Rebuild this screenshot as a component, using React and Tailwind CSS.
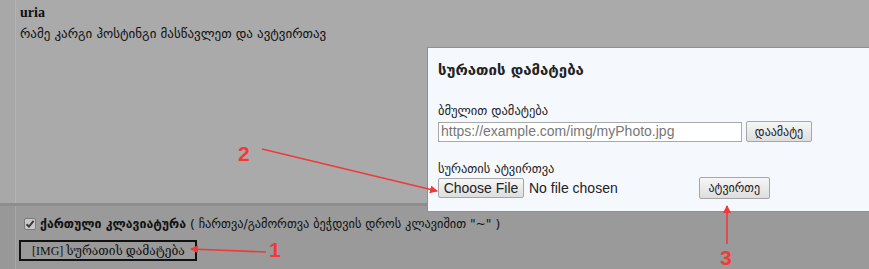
import React from "react";

const geo = { fontFamily: '"DejaVu Sans", "Noto Sans", sans-serif' };
const serif = { fontFamily: '"Liberation Serif", "DejaVu Serif", "DejaVu Sans", serif' };
const arial = { fontFamily: '"Liberation Sans", "DejaVu Sans", sans-serif' };

function Btn({ children, className = "" }) {
  return (
    <div
      className={
        "flex items-center justify-center whitespace-nowrap border border-[#a6a6a6] rounded-[2px] bg-gradient-to-b from-[#f6f6f6] to-[#dedede] text-[#222] " +
        className
      }
    >
      {children}
    </div>
  );
}

export default function App() {
  return (
    <div className="relative w-[869px] h-[269px] overflow-hidden bg-[#999a99]" style={arial}>
      {/* top area */}
      <div className="flex h-[203px] bg-[#a9aaa9]">
        <div className="w-[16px] border-r border-[#b3b4b3] bg-[#a7a8a7]" />
        <div className="flex-1 pl-[4px] pt-[4px]">
          <div className="text-[14px] font-bold leading-[18px] text-[#111]" style={serif}>
            uria
          </div>
          <div className="mt-[3px] text-[13px] leading-[17px] text-[#111] whitespace-nowrap" style={geo}>
            რამე კარგი ჰოსტინგი მასწავლეთ და ავტვირთავ
          </div>
        </div>
      </div>
      {/* separator */}
      <div className="h-[3px] bg-[#8c8d8c]" />
      {/* bottom area */}
      <div className="flex h-[63px]">
        <div className="w-[16px] border-r border-[#a6a7a6] bg-[#979897]" />
        <div className="flex-1 pl-[3px] pt-[10px]">
          <div className="flex items-center gap-[4px] h-[16px]">
            <span className="relative flex h-[12px] w-[12px] items-center justify-center rounded-[2px] border border-[#7a7a7a] bg-[#c9c9c9] ml-[5px]">
              <svg width="10" height="10" viewBox="0 0 10 10">
                <path d="M1.5 5.2 L4 7.6 L8.6 1.8" fill="none" stroke="#3a3a3a" strokeWidth="2" />
              </svg>
            </span>
            <span className="text-[12.3px] text-[#111] whitespace-nowrap" style={geo}>
              <b>ქართული კლავიატურა</b> ( ჩართვა/გამორთვა ბეჭდვის დროს კლავიშით "~" )
            </span>
          </div>
          <div className="mt-[8px] inline-flex h-[21px] w-[178px] items-center border-2 border-[#111] pl-[11px] whitespace-nowrap">
            <span className="text-[12px] leading-none text-[#111]" style={serif}>
              [IMG] სურათის დამატება
            </span>
          </div>
        </div>
      </div>

      {/* modal dialog */}
      <div className="absolute left-[427px] top-[47px] w-[450px] h-[165px] border border-[#8f8f8f] bg-[#f5f8fc] pl-[10px] pt-[12px]">
        <div className="text-[15px] font-bold leading-[20px] text-[#222] whitespace-nowrap" style={geo}>
          სურათის დამატება
        </div>
        <div className="mt-[23px] text-[12.5px] leading-[16px] text-[#222] whitespace-nowrap" style={geo}>
          ბმულით დამატება
        </div>
        <div className="mt-[2px] flex items-center gap-[4px]">
          <div className="flex h-[20px] w-[304px] items-center border border-[#a9a9a9] bg-white pl-[2px] text-[14px] text-[#777] whitespace-nowrap" style={arial}>
            https://example.com/img/myPhoto.jpg
          </div>
          <Btn className="h-[21px] w-[66px] text-[12px]">
            <span style={geo}>დაამატე</span>
          </Btn>
        </div>
        <div className="mt-[19px] text-[12.5px] leading-[16px] text-[#222] whitespace-nowrap" style={geo}>
          სურათის ატვირთვა
        </div>
        <div className="flex items-center">
          <Btn className="h-[20px] w-[86px] text-[14px]">Choose File</Btn>
          <span className="ml-[5px] text-[14px] text-[#222] whitespace-nowrap">No file chosen</span>
          <Btn className="ml-[81px] h-[22px] w-[71px] text-[12px]">
            <span style={geo}>ატვირთე</span>
          </Btn>
        </div>
      </div>

      {/* annotations */}
      <svg className="absolute left-0 top-0 pointer-events-none" width="869" height="269" viewBox="0 0 869 269">
        <defs>
          <marker id="ah" markerWidth="8" markerHeight="8" refX="7" refY="4" orient="auto" markerUnits="userSpaceOnUse">
            <path d="M0 0 L8 4 L0 8 Z" fill="#f03a3a" />
          </marker>
        </defs>
        <line x1="262" y1="149" x2="437" y2="191" stroke="#f03a3a" strokeWidth="1.6" markerEnd="url(#ah)" />
        <line x1="266" y1="252" x2="191" y2="249" stroke="#f03a3a" strokeWidth="1.6" markerEnd="url(#ah)" />
        <line x1="727" y1="244" x2="727" y2="206" stroke="#f03a3a" strokeWidth="1.6" markerEnd="url(#ah)" />
        <text x="238" y="161" fill="#f03a3a" fontSize="21" fontWeight="bold" fontFamily="Liberation Sans, sans-serif">2</text>
        <text x="269" y="257" fill="#f03a3a" fontSize="21" fontWeight="bold" fontFamily="Liberation Sans, sans-serif">1</text>
        <text x="720" y="265" fill="#f03a3a" fontSize="21" fontWeight="bold" fontFamily="Liberation Sans, sans-serif">3</text>
      </svg>
    </div>
  );
}
